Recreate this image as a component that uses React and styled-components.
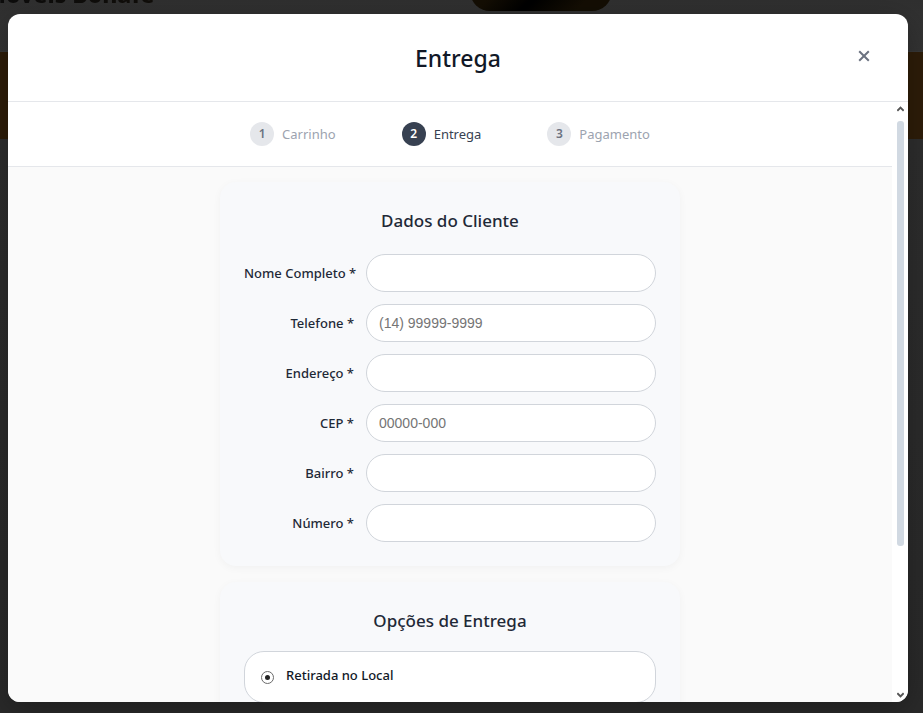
import React, { useRef, useState } from 'react';
import styled, { createGlobalStyle } from 'styled-components';

const Global = createGlobalStyle`
  *, *::before, *::after { box-sizing: border-box; }
  body { margin: 0; background: #2e2e2e; font-family: "Noto Sans", "Open Sans", sans-serif; color: #1f2937; }
  h1, h2, p { margin: 0; }
  button, input { font: inherit; }
`;

const Page = styled.div`
  position: relative;
  height: 100vh;
  overflow: hidden;
  background: linear-gradient(#303030, #343434 52px, #2e2e2e 140px, #2a2a2a);
`;

const Backdrop = styled.div`
  position: absolute;
  inset: 0;
  overflow: hidden;
`;

const SiteBar = styled.div`
  height: 52px;
  display: grid;
  grid-template-columns: 470px 142px;
  align-items: start;
  border-bottom: 1px solid #383838;
`;

const Brand = styled.div`
  margin: -20px 0 0 -16px;
  font-size: 23px;
  line-height: 28px;
  font-weight: 800;
  color: transparent;
  background: linear-gradient(90deg, #0c0c0c, #181005);
  background-clip: text;
  white-space: nowrap;
`;

const SiteButton = styled.div`
  height: 40px;
  margin-top: -29px;
  border-radius: 20px;
  background: linear-gradient(135deg, #140e04 25%, #000 50%, #140e04 80%);
`;

const Banner = styled.div`
  height: 87px;
  background: #2e1d09;
`;

const Overlay = styled.div`
  position: relative;
  height: 100%;
  padding: 14px 15px 11px 8px;
  display: flex;
  justify-content: center;
`;

const Dialog = styled.section`
  flex: 1;
  max-width: 900px;
  display: flex;
  flex-direction: column;
  background: #fff;
  border-radius: 12px;
  overflow: hidden;
  box-shadow: 0 8px 32px rgba(0, 0, 0, 0.3);
`;

const Header = styled.header`
  display: grid;
  grid-template-columns: 32px 1fr 32px;
  align-items: center;
  padding: 24px 28px 23px;
  border-bottom: 1px solid #e5e7eb;
`;

const Title = styled.h1`
  grid-column: 2;
  text-align: center;
  font-size: 23px;
  line-height: 40px;
  font-weight: 500;
  color: #111827;
`;

const Close = styled.button`
  height: 32px;
  margin-bottom: 4px;
  padding: 0;
  border: 0;
  display: grid;
  place-items: center;
  background: none;
  color: #6b7280;
  cursor: pointer;
`;

const Body = styled.div`
  flex: 1;
  min-height: 0;
  display: flex;
`;

const Scroller = styled.div`
  flex: 1;
  overflow-y: auto;
  scrollbar-width: none;
  background: #fafafa;
`;

const Rail = styled.div`
  width: 16px;
  padding: 4px 4px 4px 5px;
  display: flex;
  flex-direction: column;
  align-items: center;
  background: #fff;
  color: #555;
`;

const Track = styled.div`
  flex: 1;
  width: 7px;
  margin: 9px 0 5px;
`;

const Thumb = styled.div`
  height: 75%;
  border-radius: 3px;
  background: #d1d9e2;
`;

const Steps = styled.ol`
  margin: 0;
  padding: 20px 0;
  list-style: none;
  display: flex;
  justify-content: center;
  gap: 66px;
  background: #fff;
  border-bottom: 1px solid #e5e7eb;
`;

const Step = styled.li`
  display: flex;
  align-items: center;
  gap: 8px;
  font-size: 13px;
  line-height: 24px;
  color: ${p => (p.$active ? '#374151' : '#9ca3af')};
`;

const StepNumber = styled.span`
  width: 24px;
  height: 24px;
  border-radius: 50%;
  text-align: center;
  font-size: 12px;
  font-weight: 600;
  background: ${p => (p.$active ? '#374151' : '#e5e7eb')};
  color: ${p => (p.$active ? '#fff' : '#6b7280')};
`;

const Form = styled.form`
  max-width: 460px;
  margin: 0 auto;
  padding: 15px 0;
  display: flex;
  flex-direction: column;
  gap: 16px;
`;

const Card = styled.section`
  padding: 24px;
  border-radius: 16px;
  background: #f8f9fb;
  box-shadow: 0 2px 8px rgba(0, 0, 0, 0.04);
`;

const CardTitle = styled.h2`
  margin-bottom: ${p => p.$gap}px;
  text-align: center;
  font-size: 17px;
  line-height: 30px;
  font-weight: 500;
`;

const Fields = styled.div`
  display: grid;
  gap: 12px;
`;

const Field = styled.div`
  display: grid;
  grid-template-columns: 110px 1fr;
  column-gap: 12px;
  align-items: center;
`;

const Label = styled.label`
  text-align: right;
  white-space: nowrap;
  font-size: 13px;
  line-height: 20px;
  font-weight: 500;
`;

const Input = styled.input`
  width: 100%;
  height: 38px;
  padding: 0 12px;
  border: 1px solid #d1d5db;
  border-radius: 20px;
  background: #fff;
  color: #1f2937;
  font-family: "Liberation Sans", Arial, sans-serif;
  font-size: 14px;
  &::placeholder { color: #757575; }
`;

const Option = styled.label`
  display: flex;
  align-items: center;
  gap: 12px;
  padding: 13px 16px 17px;
  border: 1px solid #d1d5db;
  border-radius: 20px;
  background: #fff;
  color: #111827;
  font-size: 13px;
  line-height: 20px;
  font-weight: 500;
`;

const Radio = styled.input`
  appearance: none;
  flex: none;
  display: grid;
  place-items: center;
  width: 13px;
  height: 13px;
  margin: 4px 0 0;
  border: 1px solid #6b6b6b;
  border-radius: 50%;
  background: #fff;
  &:checked::before {
    content: '';
    width: 5px;
    height: 5px;
    border-radius: 50%;
    background: #222;
  }
`;

const fields = [
  { id: 'nome', label: 'Nome Completo *' },
  { id: 'telefone', label: 'Telefone *', placeholder: '(14) 99999-9999' },
  { id: 'endereco', label: 'Endereço *' },
  { id: 'cep', label: 'CEP *', placeholder: '00000-000' },
  { id: 'bairro', label: 'Bairro *' },
  { id: 'numero', label: 'Número *' },
];

const steps = ['Carrinho', 'Entrega', 'Pagamento'];

function Arrow({ down }) {
  return (
    <svg width="7" height="6" viewBox="0 0 7 6" fill="none" stroke="currentColor" strokeWidth="2" aria-hidden="true">
      <path d={down ? 'M0.3 1.2 3.5 4.4 6.7 1.2' : 'M0.3 4.8 3.5 1.6 6.7 4.8'} />
    </svg>
  );
}

export default function App() {
  const track = useRef(null);
  const [offset, setOffset] = useState(0);
  const onScroll = e => {
    const { scrollTop, scrollHeight, clientHeight } = e.currentTarget;
    const room = track.current.clientHeight * 0.25;
    setOffset((scrollTop / Math.max(1, scrollHeight - clientHeight)) * room);
  };

  return (
    <Page>
      <Global />
      <Backdrop aria-hidden="true">
        <SiteBar>
          <Brand>Móveis Bonafé</Brand>
          <SiteButton />
        </SiteBar>
        <Banner />
      </Backdrop>
      <Overlay>
        <Dialog role="dialog" aria-modal="true" aria-labelledby="titulo">
          <Header>
            <Title id="titulo">Entrega</Title>
            <Close type="button" aria-label="Fechar">
              <svg width="12" height="12" viewBox="0 0 12 12" fill="none" stroke="currentColor" strokeWidth="2">
                <path d="M1.2 1.2 10.8 10.8M10.8 1.2 1.2 10.8" />
              </svg>
            </Close>
          </Header>
          <Body>
            <Scroller onScroll={onScroll}>
              <Steps>
                {steps.map((name, i) => (
                  <Step key={name} $active={i === 1} aria-current={i === 1 ? 'step' : undefined}>
                    <StepNumber $active={i === 1}>{i + 1}</StepNumber>
                    {name}
                  </Step>
                ))}
              </Steps>
              <Form>
                <Card>
                  <CardTitle $gap={18}>Dados do Cliente</CardTitle>
                  <Fields>
                    {fields.map(f => (
                      <Field key={f.id}>
                        <Label htmlFor={f.id}>{f.label}</Label>
                        <Input id={f.id} type="text" placeholder={f.placeholder} required />
                      </Field>
                    ))}
                  </Fields>
                </Card>
                <Card>
                  <CardTitle $gap={15}>Opções de Entrega</CardTitle>
                  <Option>
                    <Radio type="radio" name="entrega" defaultChecked />
                    Retirada no Local
                  </Option>
                </Card>
              </Form>
            </Scroller>
            <Rail aria-hidden="true">
              <Arrow />
              <Track ref={track}>
                <Thumb style={{ transform: `translateY(${offset}px)` }} />
              </Track>
              <Arrow down />
            </Rail>
          </Body>
        </Dialog>
      </Overlay>
    </Page>
  );
}
